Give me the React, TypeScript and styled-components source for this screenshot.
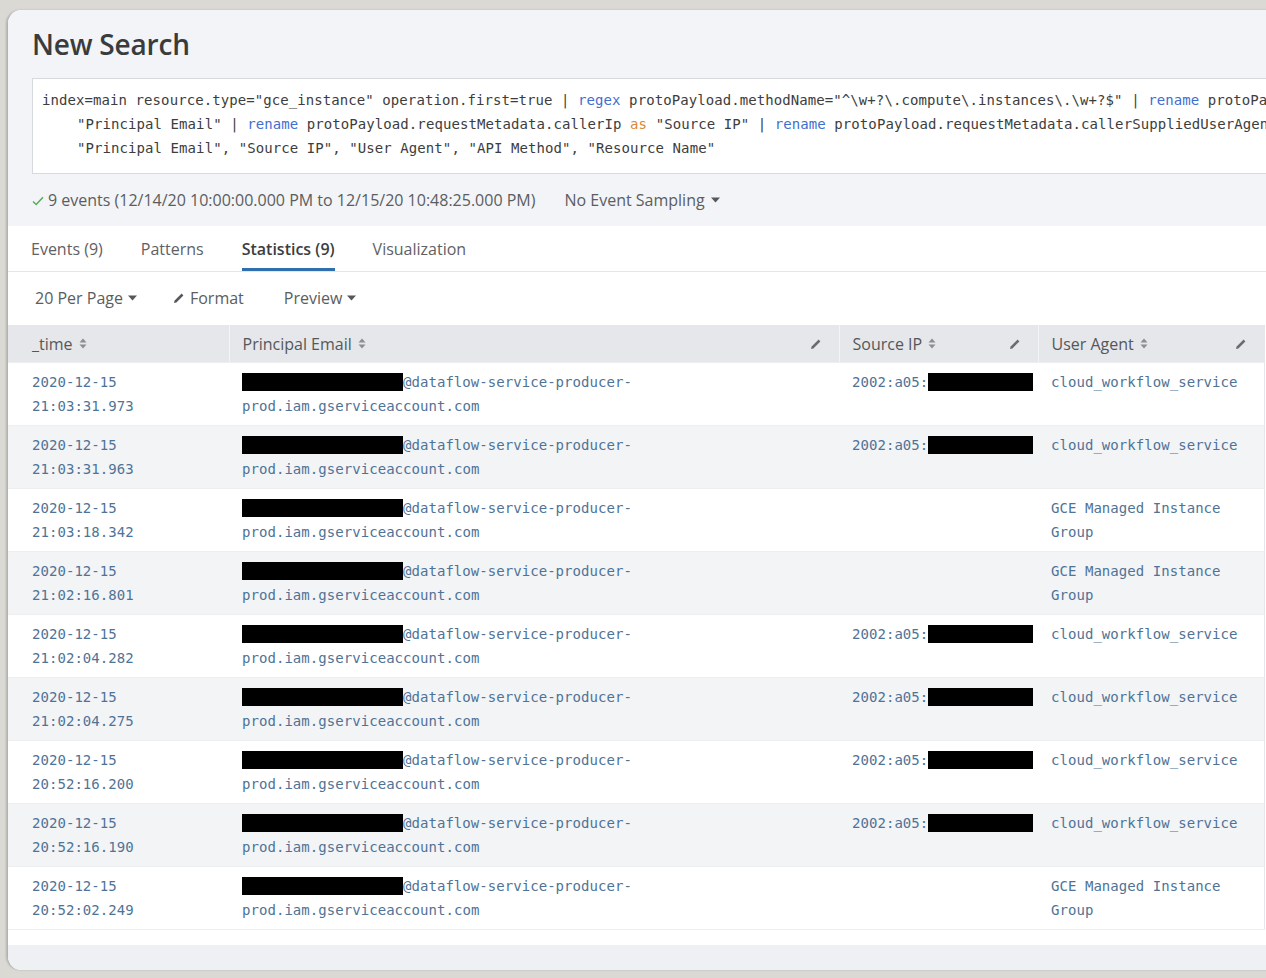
import React from "react";
import styled, { createGlobalStyle } from "styled-components";

const GlobalStyle = createGlobalStyle`
  html, body { margin: 0; padding: 0; }
  body {
    background: #dbd9d4;
    overflow: hidden;
    font-family: "Open Sans", "Liberation Sans", sans-serif;
    width: 1266px;
    height: 978px;
  }
`;

const Page = styled.div`
  padding: 10px 0 0 7px;
  height: 978px;
  box-sizing: border-box;
`;

const Panel = styled.div`
  width: 1320px;
  height: 960px;
  background: #ffffff;
  border-radius: 14px 0 0 14px;
  border-left: 1px solid #b4b2ad;
  box-shadow: -1px 0 2px rgba(0, 0, 0, 0.18);
  overflow: hidden;
  display: flex;
  flex-direction: column;
`;

const Top = styled.div`
  background: #f2f4f7;
  padding: 17px 0 14px 24px;
`;

const Title = styled.h1`
  margin: 0;
  font-size: 28px;
  line-height: 34px;
  font-weight: 600;
  color: #3a3b3d;
  letter-spacing: -0.2px;
`;

const SearchBox = styled.div`
  margin-top: 17px;
  background: #ffffff;
  border: 1px solid #d6d9dd;
  border-right: none;
  padding: 9px 0 13px 9px;
  font-family: "DejaVu Sans Mono", "Liberation Mono", monospace;
  font-size: 14px;
  letter-spacing: 0.08px;
  line-height: 24px;
  color: #3d3d3d;
  white-space: pre;
  overflow: hidden;
`;

const Line = styled.div<{ $indent?: boolean }>`
  padding-left: ${(p) => (p.$indent ? "35px" : "0")};
`;

const Kw = styled.span<{ $orange?: boolean }>`
  color: ${(p) => (p.$orange ? "#d8883a" : "#3f6fcf")};
`;

const Status = styled.div`
  margin-top: 14px;
  display: flex;
  align-items: center;
  font-size: 16px;
  line-height: 24px;
  color: #5b5d60;
`;

const Check = styled.svg`
  width: 12px;
  height: 10px;
  margin-right: 4px;
  margin-top: 1px;
`;

const Sampling = styled.span`
  margin-left: 29px;
  display: inline-flex;
  align-items: center;
  gap: 6px;
`;

const Tabs = styled.div`
  display: flex;
  gap: 38px;
  padding: 0 0 0 23px;
  border-bottom: 1px solid #e3e5e8;
`;

const Tab = styled.div<{ $active?: boolean }>`
  padding: 11px 0 7px;
  font-size: 16px;
  line-height: 24px;
  color: ${(p) => (p.$active ? "#3c3d40" : "#5f6164")};
  font-weight: ${(p) => (p.$active ? 600 : 400)};
  border-bottom: 3px solid ${(p) => (p.$active ? "#2f6fae" : "transparent")};
`;

const Toolbar = styled.div`
  display: flex;
  align-items: center;
  padding: 14px 0 15px 27px;
  font-size: 16px;
  line-height: 24px;
  color: #5b5d60;
`;

const ToolItem = styled.span<{ $gap: number }>`
  display: inline-flex;
  align-items: center;
  gap: 5px;
  margin-right: ${(p) => p.$gap}px;
`;

const Table = styled.table`
  width: 1256px;
  table-layout: fixed;
  border-collapse: collapse;
  border-right: 1px solid #e4e6e9;
`;

const Th = styled.th<{ $pl?: number }>`
  background: #e5e7ea;
  height: 37px;
  padding: 0 17px 0 ${(p) => p.$pl ?? 13}px;
  text-align: left;
  font-weight: 400;
  font-size: 16px;
  color: #55575a;
  border-left: 1px solid #f3f4f6;
  border-bottom: 1px solid #eceef0;
  &:first-child { border-left: none; }
`;

const HeadInner = styled.div`
  display: flex;
  align-items: center;
  justify-content: space-between;
`;

const HeadLabel = styled.span`
  display: inline-flex;
  align-items: center;
  gap: 6px;
`;

const Tr = styled.tr<{ $alt?: boolean }>`
  background: ${(p) => (p.$alt ? "#f3f4f6" : "#ffffff")};
  border-bottom: 1px solid #eceef0;
`;

const Td = styled.td<{ $pl?: number; $nowrap?: boolean }>`
  padding: 7px ${(p) => (p.$nowrap ? 0 : 8)}px 7px ${(p) => p.$pl ?? 13}px;
  vertical-align: top;
  font-family: "DejaVu Sans Mono", "Liberation Mono", monospace;
  font-size: 14px;
  letter-spacing: 0.05px;
  line-height: 24px;
  color: #4f7396;
  overflow: hidden;
  white-space: ${(p) => (p.$nowrap ? "nowrap" : "normal")};
`;

const Redact = styled.span<{ $w: number }>`
  display: inline-block;
  width: ${(p) => p.$w}px;
  height: 18px;
  background: #000;
  vertical-align: -4px;
`;

const TableEnd = styled.div`
  height: 25px;
  background: #ffffff;
`;

const BottomStrip = styled.div`
  height: 40px;
  background: #eef0f3;
`;

const Caret = () => (
  <svg width="9" height="6" viewBox="0 0 9 6">
    <path d="M0 0.5 L9 0.5 L4.5 5.5 Z" fill="#55575a" />
  </svg>
);

const Sort = () => (
  <svg width="8" height="13" viewBox="0 0 8 13">
    <path d="M0.5 5.5 L4 1.5 L7.5 5.5 Z M0.5 7.5 L4 11.5 L7.5 7.5 Z" fill="#8c8e91" />
  </svg>
);

const Pencil = ({ c = "#6a6c6f" }: { c?: string }) => (
  <svg width="12" height="12" viewBox="0 0 12 12">
    <path d="M1 11 L1.6 8.6 L8.6 1.6 L10.4 3.4 L3.4 10.4 Z" fill={c} />
  </svg>
);

type Row = { d: string; t: string; ip: boolean; ua: string[] };

const rows: Row[] = [
  { d: "2020-12-15", t: "21:03:31.973", ip: true, ua: ["cloud_workflow_service"] },
  { d: "2020-12-15", t: "21:03:31.963", ip: true, ua: ["cloud_workflow_service"] },
  { d: "2020-12-15", t: "21:03:18.342", ip: false, ua: ["GCE Managed Instance", "Group"] },
  { d: "2020-12-15", t: "21:02:16.801", ip: false, ua: ["GCE Managed Instance", "Group"] },
  { d: "2020-12-15", t: "21:02:04.282", ip: true, ua: ["cloud_workflow_service"] },
  { d: "2020-12-15", t: "21:02:04.275", ip: true, ua: ["cloud_workflow_service"] },
  { d: "2020-12-15", t: "20:52:16.200", ip: true, ua: ["cloud_workflow_service"] },
  { d: "2020-12-15", t: "20:52:16.190", ip: true, ua: ["cloud_workflow_service"] },
  { d: "2020-12-15", t: "20:52:02.249", ip: false, ua: ["GCE Managed Instance", "Group"] },
];

const cols = [
  { label: "_time", w: 221, pl: 24, edit: false },
  { label: "Principal Email", w: 610, pl: 13, edit: true },
  { label: "Source IP", w: 199, pl: 13, edit: true },
  { label: "User Agent", w: 226, pl: 13, edit: true },
];

export default function App() {
  return (
    <>
      <GlobalStyle />
      <Page>
        <Panel>
          <Top>
            <Title>New Search</Title>
            <SearchBox>
              <Line>
                {'index=main resource.type="gce_instance" operation.first=true | '}
                <Kw>regex</Kw>
                {' protoPayload.methodName="^\\w+?\\.compute\\.instances\\.\\w+?$" | '}
                <Kw>rename</Kw>
                {" protoPayload.authenticationInfo.principalEmail as"}
              </Line>
              <Line $indent>
                {'"Principal Email" | '}
                <Kw>rename</Kw>
                {" protoPayload.requestMetadata.callerIp "}
                <Kw $orange>as</Kw>
                {' "Source IP" | '}
                <Kw>rename</Kw>
                {" protoPayload.requestMetadata.callerSuppliedUserAgent as"}
              </Line>
              <Line $indent>
                {'"Principal Email", "Source IP", "User Agent", "API Method", "Resource Name"'}
              </Line>
            </SearchBox>
            <Status>
              <Check viewBox="0 0 12 10">
                <path d="M1 5.5 L4.2 8.5 L11 1.2" fill="none" stroke="#5aaa5a" strokeWidth="1.5" />
              </Check>
              9 events (12/14/20 10:00:00.000 PM to 12/15/20 10:48:25.000 PM)
              <Sampling>
                No Event Sampling <Caret />
              </Sampling>
            </Status>
          </Top>
          <Tabs>
            <Tab>Events (9)</Tab>
            <Tab>Patterns</Tab>
            <Tab $active>Statistics (9)</Tab>
            <Tab>Visualization</Tab>
          </Tabs>
          <Toolbar>
            <ToolItem $gap={36}>
              20 Per Page <Caret />
            </ToolItem>
            <ToolItem $gap={40}>
              <Pencil c="#55575a" /> Format
            </ToolItem>
            <ToolItem $gap={0}>
              Preview <Caret />
            </ToolItem>
          </Toolbar>
          <Table>
            <colgroup>
              {cols.map((c) => (
                <col key={c.label} style={{ width: c.w }} />
              ))}
            </colgroup>
            <thead>
              <tr>
                {cols.map((c) => (
                  <Th key={c.label} $pl={c.pl}>
                    <HeadInner>
                      <HeadLabel>
                        {c.label} <Sort />
                      </HeadLabel>
                      {c.edit && <Pencil />}
                    </HeadInner>
                  </Th>
                ))}
              </tr>
            </thead>
            <tbody>
              {rows.map((r, i) => (
                <Tr key={i} $alt={i % 2 === 1}>
                  <Td $pl={24}>
                    {r.d}
                    <br />
                    {r.t}
                  </Td>
                  <Td>
                    <Redact $w={161} />
                    @dataflow-service-producer-
                    <br />
                    prod.iam.gserviceaccount.com
                  </Td>
                  <Td $nowrap>
                    {r.ip && (
                      <>
                        2002:a05:
                        <Redact $w={105} />
                      </>
                    )}
                  </Td>
                  <Td>
                    {r.ua.map((u, j) => (
                      <React.Fragment key={j}>
                        {j > 0 && <br />}
                        {u}
                      </React.Fragment>
                    ))}
                  </Td>
                </Tr>
              ))}
            </tbody>
          </Table>
          <TableEnd />
          <BottomStrip />
        </Panel>
      </Page>
    </>
  );
}
